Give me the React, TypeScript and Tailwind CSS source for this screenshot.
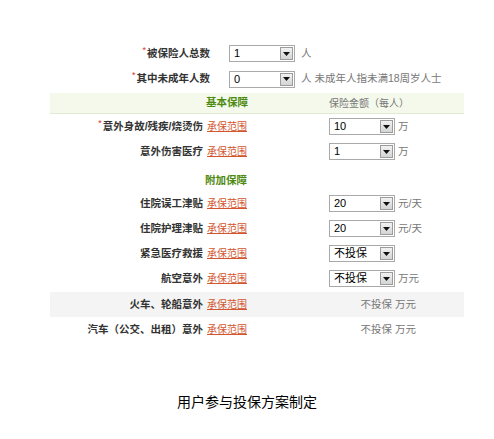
import React from 'react';

const font = { fontFamily: '"Liberation Sans", "Noto Sans CJK SC", sans-serif' };

const Select = ({ value }: { value: string }) => (
  <div className="flex h-[17px] w-[66px] items-center justify-between border border-[#a9a9a9] bg-white pl-[4px] pr-[1px]">
    <span className="text-[11px] leading-none text-black">{value}</span>
    <span className="flex h-[13px] w-[13px] items-center justify-center border border-[#9c9c9c] bg-gradient-to-b from-[#f2f2f2] to-[#d4d4d4]">
      <svg width="7" height="4" viewBox="0 0 7 4">
        <path d="M0 0 L7 0 L3.5 4 Z" fill="#111" />
      </svg>
    </span>
  </div>
);

const Link = () => (
  <span className="ml-[4px] text-[10px] font-normal text-[#d2552e] underline decoration-[#d2552e]">承保范围</span>
);

const Star = () => <span className="mr-[1px] self-start pt-[5px] text-[9px] leading-none text-[#e0322b]">*</span>;

type Row = { label: string; star?: boolean; value?: string; unit?: string; text?: string; grey?: boolean };

const rows: Row[] = [
  { label: '意外身故/残疾/烧烫伤', star: true, value: '10', unit: '万' },
  { label: '意外伤害医疗', value: '1', unit: '万' },
];

const extra: Row[] = [
  { label: '住院误工津贴', value: '20', unit: '元/天' },
  { label: '住院护理津贴', value: '20', unit: '元/天' },
  { label: '紧急医疗救援', value: '不投保' },
  { label: '航空意外', value: '不投保', unit: '万元' },
  { label: '火车、轮船意外', text: '不投保 万元', grey: true },
  { label: '汽车（公交、出租）意外', text: '不投保 万元' },
];

const PlanRow = ({ row }: { row: Row }) => (
  <div className={`flex h-[25px] items-center ${row.grey ? 'mt-[1px] bg-[#f4f4f4]' : ''}`}>
    <div className="flex h-full w-[197px] items-center justify-end whitespace-nowrap">
      {row.star && <Star />}
      <span className="text-[10.5px] font-bold text-[#333]">{row.label}</span>
      <Link />
    </div>
    <div className="ml-[82px] flex items-center">
      {row.value ? (
        <>
          <Select value={row.value} />
          {row.unit && <span className="ml-[3px] text-[10.5px] text-[#777]">{row.unit}</span>}
        </>
      ) : (
        <span className="w-[87px] text-right text-[10.5px] text-[#777]">{row.text}</span>
      )}
    </div>
  </div>
);

export default function App() {
  return (
    <div className="h-[439px] w-[494px] bg-white" style={font}>
      <div className="ml-[50px] w-[414px] pt-[41px]">
        {/* 人数 */}
        <div className="flex h-[25px] items-center">
          <div className="flex h-full w-[160px] items-center justify-end">
            <Star />
            <span className="text-[10.5px] font-bold text-[#333]">被保险人总数</span>
          </div>
          <div className="ml-[19px]"><Select value="1" /></div>
          <span className="ml-[6px] text-[10.5px] text-[#777]">人</span>
        </div>
        <div className="flex h-[26px] items-center">
          <div className="flex h-full w-[160px] items-center justify-end">
            <Star />
            <span className="text-[10.5px] font-bold text-[#333]">其中未成年人数</span>
          </div>
          <div className="ml-[19px]"><Select value="0" /></div>
          <span className="ml-[6px] text-[10.5px] text-[#777]">人 未成年人指未满18周岁人士</span>
        </div>

        {/* 基本保障 */}
        <div className="mt-[1px] flex h-[21px] items-center border-b border-[#e3ead3] bg-[#f4f9ec]">
          <div className="w-[198px] text-right text-[10.5px] font-bold text-[#4f8a10]">基本保障</div>
          <div className="ml-[81px] text-[10px] text-[#777]">保险金额（每人）</div>
        </div>
        {rows.map((r) => (
          <PlanRow key={r.label} row={r} />
        ))}

        {/* 附加保障 */}
        <div className="flex h-[27px] items-end pb-[2px]">
          <div className="w-[197px] text-right text-[10.5px] font-bold text-[#4f8a10]">附加保障</div>
        </div>
        {extra.map((r) => (
          <PlanRow key={r.label} row={r} />
        ))}
      </div>

      <div className="mt-[50px] text-center text-[14px] text-black">用户参与投保方案制定</div>
    </div>
  );
}
